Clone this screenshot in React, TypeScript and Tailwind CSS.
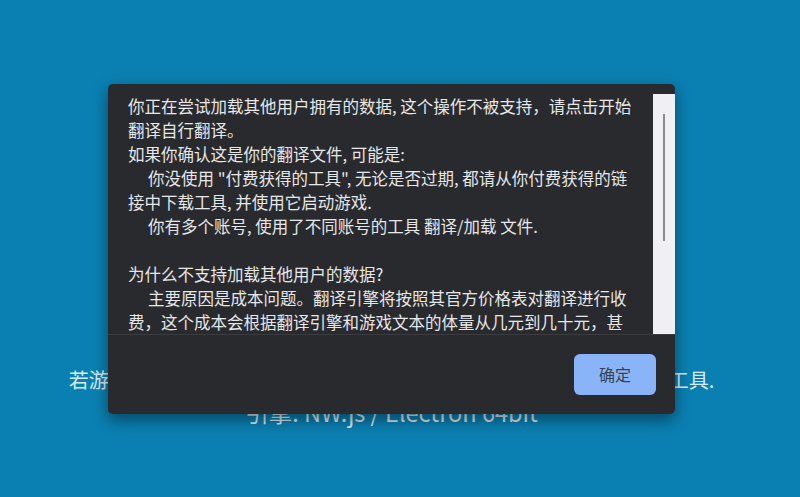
import React from "react";

const cjk = "font-['Noto_Sans_CJK_SC','Noto_Sans',sans-serif]";

const Notice: React.FC = () => (
  <div className="w-[567px] rounded-[5px] bg-[#292a2d] shadow-[0_6px_16px_rgba(0,0,0,0.45)] flex flex-col">
    <div className="mt-[10px] h-[240px] flex">
      <div className="flex-1 overflow-hidden px-[20px] text-[16.5px] leading-[24px] text-[#e6e7e9]">
        <p>你正在尝试加载其他用户拥有的数据, 这个操作不被支持，请点击开始翻译自行翻译。</p>
        <p>如果你确认这是你的翻译文件, 可能是:</p>
        <p className="indent-[20px]">
          你没使用 "付费获得的工具", 无论是否过期, 都请从你付费获得的链接中下载工具, 并使用它启动游戏.
        </p>
        <p className="indent-[20px]">你有多个账号, 使用了不同账号的工具 翻译/加载 文件.</p>
        <p className="h-[24px]"></p>
        <p>为什么不支持加载其他用户的数据?</p>
        <p className="indent-[20px]">
          主要原因是成本问题。翻译引擎将按照其官方价格表对翻译进行收费，这个成本会根据翻译引擎和游戏文本的体量从几元到几十元，甚至上百元不等。如果允许加载其他用户的数据，翻译成本将无法得到保障。
        </p>
      </div>
      {/* custom scrollbar track */}
      <div className="w-[22px] bg-[#f0f0f4] flex justify-center pt-[20px]">
        <div className="w-[2px] h-[127px] bg-[#8c8c8e]"></div>
      </div>
    </div>
    <div className="h-px bg-[#3b3c3f]"></div>
    <div className="h-[79px] flex items-center justify-end px-[19px]">
      <button className="w-[82px] h-[41px] rounded-[6px] bg-[#8ab4f8] text-[16px] text-[#37414f]">
        确定
      </button>
    </div>
  </div>
);

export default function App() {
  return (
    <div className={`h-[497px] w-full bg-[#0a80b2] overflow-hidden ${cjk}`}>
      <div className="relative w-[783px] h-full">
        <div className="flex flex-col items-center pt-[364px] text-[#d8ebf4]">
          <p className="text-[20px] leading-[32px]">若游戏无法启动或出现黑屏，请尝试关闭杀毒软件后再重新运行翻译工具.</p>
          <p className="text-[23.5px] leading-[32px]">引擎: NW.js / Electron 64bit</p>
        </div>
        <div className="absolute inset-0 flex items-center justify-center">
          <Notice />
        </div>
      </div>
    </div>
  );
}
